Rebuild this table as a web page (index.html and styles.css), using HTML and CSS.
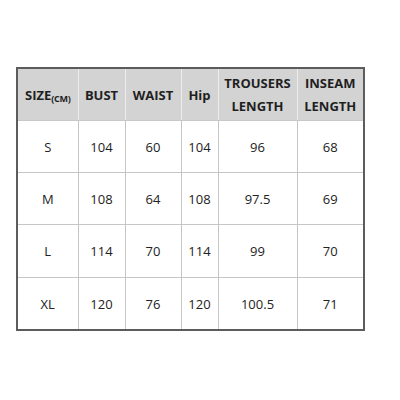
FILE: index.html
```html
<!DOCTYPE html>
<html>
<head>
<meta charset="utf-8">
<link rel="stylesheet" href="styles.css">
</head>
<body>
<table class="size-table">
  <colgroup>
    <col class="c1"><col class="c2"><col class="c3"><col class="c4"><col class="c5"><col class="c6">
  </colgroup>
  <thead>
    <tr>
      <th>SIZE<span class="unit">(CM)</span></th>
      <th>BUST</th>
      <th>WAIST</th>
      <th>Hip</th>
      <th class="two">TROUSERS<br>LENGTH</th>
      <th class="two">INSEAM<br>LENGTH</th>
    </tr>
  </thead>
  <tbody>
    <tr><td>S</td><td>104</td><td>60</td><td>104</td><td>96</td><td>68</td></tr>
    <tr><td>M</td><td>108</td><td>64</td><td>108</td><td>97.5</td><td>69</td></tr>
    <tr class="tall"><td>L</td><td>114</td><td>70</td><td>114</td><td>99</td><td>70</td></tr>
    <tr><td>XL</td><td>120</td><td>76</td><td>120</td><td>100.5</td><td>71</td></tr>
  </tbody>
</table>
</body>
</html>
```
FILE: styles.css
```css
html, body {
  margin: 0;
  padding: 0;
  background: #fff;
}
body {
  padding: 67px 0 0 16px;
  font-family: "Open Sans", "Noto Sans", sans-serif;
  color: #222;
}
.size-table {
  border-collapse: collapse;
  table-layout: fixed;
  width: 347px;
  border: 2px solid #5c5c5c;
}
.c1 { width: 61px; }
.c2 { width: 47px; }
.c3 { width: 56px; }
.c4 { width: 37px; }
.c5 { width: 79px; }
.c6 { width: 67px; }
.size-table th,
.size-table td {
  padding: 0;
  text-align: center;
  vertical-align: middle;
}
.size-table th {
  background: #d3d3d3;
  height: 51px;
  font-size: 13px;
  font-weight: 700;
  color: #1f1f1f;
  border-left: 1px solid #ececec;
  border-right: 1px solid #ececec;
  border-bottom: 1px solid #c8c8c8;
}
.size-table th.two {
  line-height: 23px;
}
.unit {
  font-size: 9px;
  letter-spacing: -0.3px;
  position: relative;
  top: 2px;
}
.size-table td {
  height: 51px;
  font-size: 13px;
  border: 1px solid #c6c6c6;
}
.size-table tr.tall td {
  height: 52px;
}
```
